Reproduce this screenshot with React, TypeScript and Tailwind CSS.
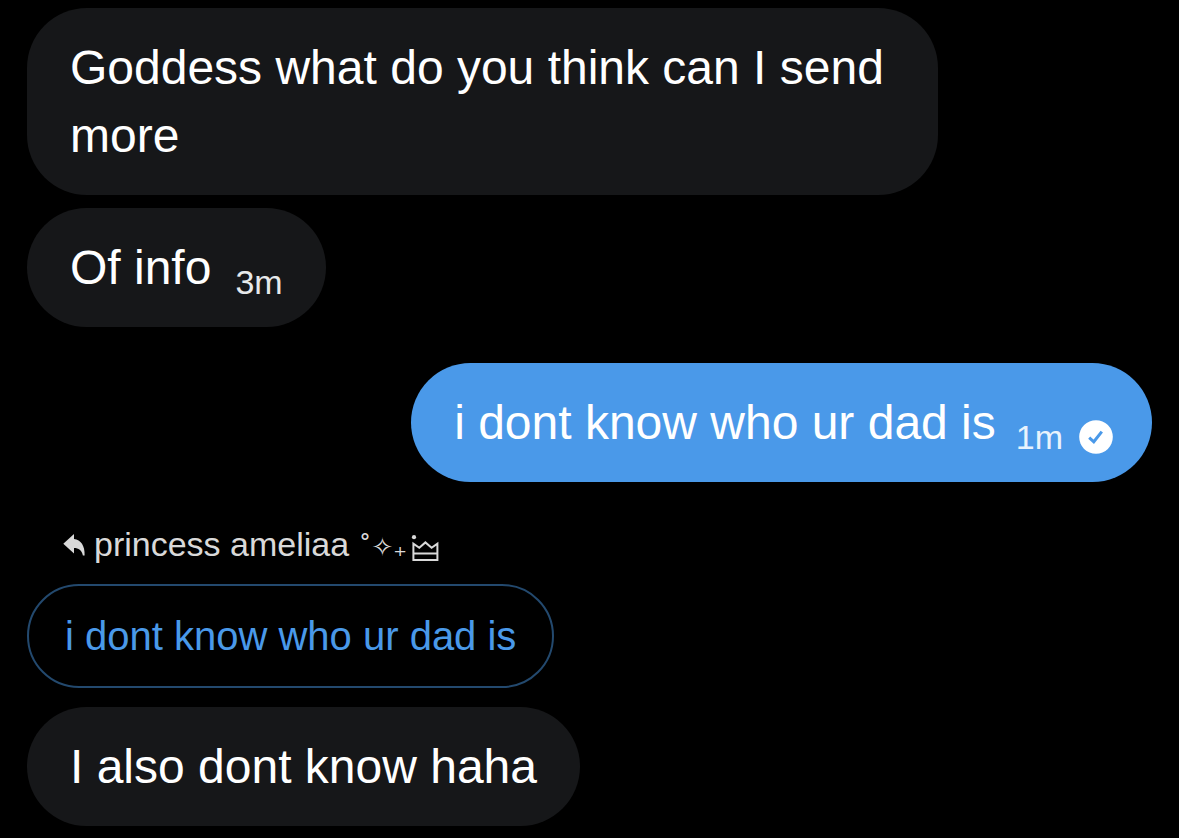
import type { ReactNode } from "react";

function Bubble({ children, own = false }: { children: ReactNode; own?: boolean }) {
  return (
    <div
      className={
        own
          ? "flex max-w-[81%] items-end self-end rounded-[60px] bg-[#4a99e9] pt-[26px] pr-[39px] pb-[25px] pl-[43px]"
          : "flex max-w-[81%] items-end self-start rounded-[60px] bg-[#161719] px-[43px] pt-[26px] pb-[25px]"
      }
    >
      {children}
    </div>
  );
}

function ReplyIcon() {
  return (
    <svg aria-hidden="true" viewBox="0 0 22 22" className="h-[22px] w-[22px] shrink-0 fill-[#d9d9d9]">
      <path d="M0.3 9.8 L11 0 V5.1 C17.8 5.9 22 11.8 21.6 21.4 H19.9 C18.6 16.2 15.8 14 11 14 V19.6 Z" />
    </svg>
  );
}

function CrownIcon() {
  return (
    <svg role="img" aria-label="crown" viewBox="0 0 28 28" className="h-[28px] w-[28px] shrink-0">
      <circle cx="3" cy="3.2" r="2.1" fill="#d9d9d9" />
      <path
        d="M2.4 26 V9.6 L8.3 13.8 L14.4 8.4 L20.6 13.8 L26.4 9.6 V26 Z M2.4 19.6 H26.4"
        fill="none"
        stroke="#d9d9d9"
        strokeWidth="2"
      />
    </svg>
  );
}

function SentIcon() {
  return (
    <svg role="img" aria-label="Sent" viewBox="0 0 34 34" className="ml-4 h-[34px] w-[34px] shrink-0">
      <circle cx="17" cy="17" r="16.8" fill="#fff" />
      <path d="M10.2 17.6 L14.8 21.8 L22.8 11.6" fill="none" stroke="#4a99e9" strokeWidth="3" />
    </svg>
  );
}

export default function App() {
  return (
    <main className="flex min-h-screen flex-col bg-black px-[27px] pt-2 pb-3 font-['Liberation_Sans',sans-serif] text-[48px] leading-[68px] text-white">
      <Bubble>
        <p>Goddess what do you think can I send more</p>
      </Bubble>
      <div className="mt-[13px] flex flex-col">
        <Bubble>
          <p>Of info</p>
          <time className="ml-6 text-[34px] leading-[40px] text-[#e7e9ea]">3m</time>
        </Bubble>
      </div>
      <div className="mt-[36px] flex flex-col">
        <Bubble own>
          <p>i dont know who ur dad is</p>
          <div className="ml-5 flex items-center">
            <time className="text-[34px] leading-[40px] text-[#e8f3fd]">1m</time>
            <SentIcon />
          </div>
        </Bubble>
      </div>
      <div className="mt-[38px] flex h-[50px] items-center pl-9 text-[34px] leading-[50px] text-[#d9d9d9]">
        <ReplyIcon />
        <p className="ml-[9px]">
          princess ameliaa <span className="font-['DejaVu_Sans'] text-[26px]">˚✧₊</span>
        </p>
        <span className="ml-1 flex pt-[6px]">
          <CrownIcon />
        </span>
      </div>
      <blockquote className="mt-[14px] self-start rounded-[52px] border-2 border-[#23496e] px-[36px] py-[25px] text-[40px] leading-[50px] text-[#4a99e9]">
        i dont know who ur dad is
      </blockquote>
      <div className="mt-[19px] flex flex-col">
        <Bubble>
          <p>I also dont know haha</p>
        </Bubble>
      </div>
    </main>
  );
}
